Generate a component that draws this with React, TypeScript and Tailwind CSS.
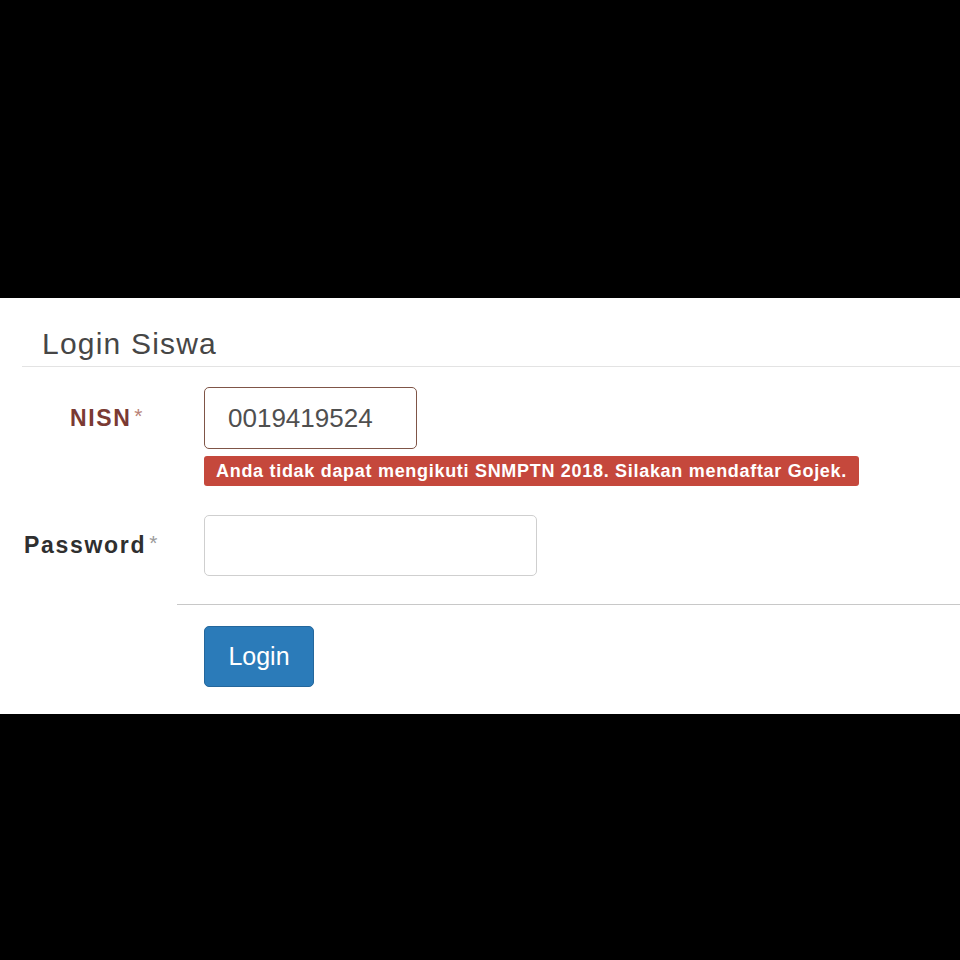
const font = { fontFamily: '"Liberation Sans", Arial, sans-serif' }

export default function App() {
  return (
    <div className="w-[960px] h-[960px] bg-black flex flex-col" style={font}>
      <div className="h-[298px] shrink-0" />

      <div className="h-[416px] shrink-0 bg-white flex flex-col">
        <div className="ml-[22px] h-[69px] border-b border-[#e3e3e3] flex items-end pb-[5px]">
          <h1 className="pl-[20px] text-[30px] leading-[34px] tracking-[1.2px] text-[#464646]">
            Login Siswa
          </h1>
        </div>

        <div className="flex mt-[20px]">
          <div className="w-[204px] shrink-0 h-[62px] flex items-center pl-[70px]">
            <span className="text-[23px] font-bold tracking-[1.6px] text-[#7a3a33]">NISN</span>
            <span className="ml-[3px] text-[21px] leading-none text-[#b88276] -mt-[6px]">*</span>
          </div>
          <div className="flex flex-col">
            <div className="w-[213px] h-[62px] border border-[#7f5547] rounded-[5px] flex items-center pl-[23px] bg-white">
              <span className="text-[26px] text-[#4f4f4f]">0019419524</span>
            </div>
            <div className="mt-[7px] w-[655px] h-[30px] rounded-[3px] bg-[#c5483c] flex items-center pl-[12px]">
              <span className="text-[18px] font-bold text-white tracking-[0.7px] whitespace-nowrap">
                Anda tidak dapat mengikuti SNMPTN 2018. Silakan mendaftar Gojek.
              </span>
            </div>
          </div>
        </div>

        <div className="flex mt-[29px]">
          <div className="w-[204px] shrink-0 h-[61px] flex items-center pl-[24px]">
            <span className="text-[23px] font-bold tracking-[1.7px] text-[#2f2f2f]">Password</span>
            <span className="ml-[3px] text-[21px] leading-none text-[#9a9a9a] -mt-[6px]">*</span>
          </div>
          <div className="w-[333px] h-[61px] border border-[#cfcfcf] rounded-[5px] bg-white" />
        </div>

        <div className="ml-[177px] mt-[28px] border-t border-[#c8c8c8]" />

        <div className="mt-[21px] ml-[204px]">
          <button className="w-[110px] h-[61px] rounded-[5px] bg-[#2b7bb9] border border-[#24679c] text-white text-[25px] flex items-center justify-center">
            Login
          </button>
        </div>
      </div>

      <div className="flex-1" />
    </div>
  )
}
